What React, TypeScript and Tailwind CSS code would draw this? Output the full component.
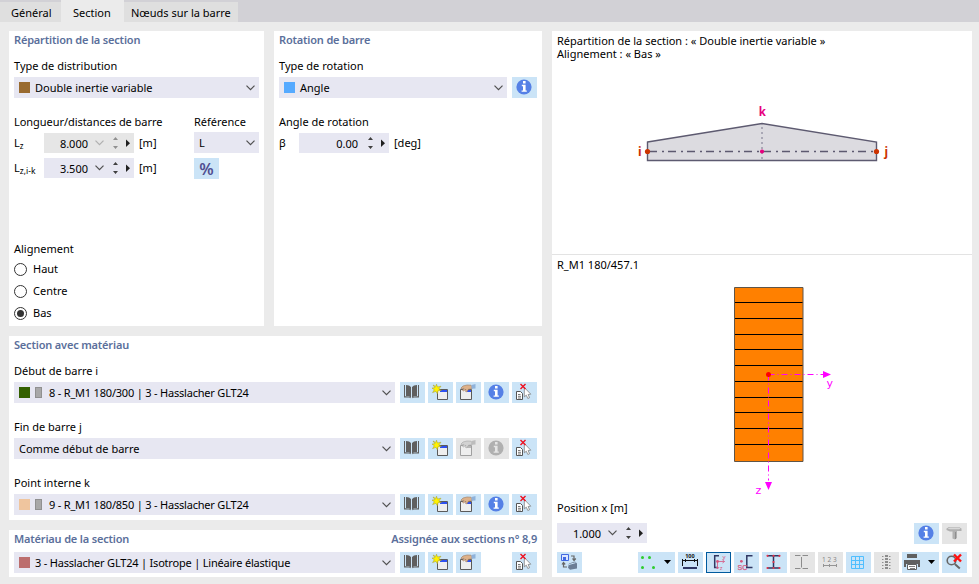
import * as React from "react";
import clsx from "clsx";

interface IChildren {
   children?: React.ReactNode;
   className?: string;
}

function Panel({ children, className }: IChildren) {
   return <section className={clsx("bg-white px-[5px]", className)}>{children}</section>;
}

function Title({ children }: IChildren) {
   return (
      <h2 className="h-[20px] text-[11px] leading-[18px] font-semibold tracking-[-0.18px] whitespace-nowrap text-[#5b6f9b]">
         {children}
      </h2>
   );
}

function Label({ children, className = "h-[20px]" }: IChildren) {
   return <div className={clsx("leading-[18px] whitespace-nowrap", className)}>{children}</div>;
}

function Chevron({ muted = false }: { muted?: boolean }) {
   return (
      <svg width="9" height="6" viewBox="0 0 9 6" fill="none" stroke={muted ? "#b0b0b0" : "#505050"} strokeWidth="1.2">
         <path d="M0.5 0.7 4.5 4.7 8.5 0.7" />
      </svg>
   );
}

interface ISelectProps {
   text: string;
   swatch?: string;
   section?: boolean;
   className?: string;
}

function Select({ text, swatch, section, className }: ISelectProps) {
   return (
      <div className={clsx("flex h-[21px] items-center bg-[#e7e7f2] pr-[4px] pl-[5px]", className)}>
         {swatch && <span className={clsx("mr-[5px] h-[11px] w-[11px]", swatch)} />}
         {section && <span className="mr-[7px] h-[11px] w-[7px] border-[1.5px] border-[#909090] bg-[#a8a8a8]" />}
         <span className="grow pt-[2px] whitespace-nowrap">{text}</span>
         <Chevron />
      </div>
   );
}

interface INumberProps {
   value: string;
   muted?: boolean;
   chevron?: boolean;
}

function NumberField({ value, muted = false, chevron = true }: INumberProps) {
   return (
      <div className={clsx("flex h-[20px] w-[90px] items-center", muted ? "bg-[#e6e6e6]" : "bg-[#e7e7f2]")}>
         <span className={clsx("pt-[2px] text-right", chevron ? "mr-[7px] w-[44px]" : "mr-[9px] w-[59px]")}>
            {value}
         </span>
         {chevron && <Chevron muted={muted} />}
         <svg
            width="20"
            height="14"
            viewBox="0 0 20 14"
            className={chevron ? "ml-[8px]" : "ml-0"}
            fill={muted ? "#909090" : "#404040"}
         >
            <path d="M1 4 3.5 1 6 4ZM1 10 3.5 13 6 10Z" />
            <path d="M14 3.5 18 7.2 14 11Z" fill="#202020" />
         </svg>
      </div>
   );
}

function Radio({ label, checked = false }: { label: string; checked?: boolean }) {
   return (
      <div className="flex h-[22px] items-center gap-[6px]">
         <span className="flex h-[13px] w-[13px] items-center justify-center rounded-full border border-[#333333] bg-white">
            {checked && <span className="h-[7px] w-[7px] rounded-full bg-[#333333]" />}
         </span>
         <span>{label}</span>
      </div>
   );
}

interface IButtonProps extends IChildren {
   off?: boolean;
   active?: boolean;
   wide?: boolean;
}

function IconButton({ children, off, active, wide, className }: IButtonProps) {
   return (
      <button
         className={clsx(
            "block h-[21px] shrink-0",
            wide ? "w-[37px]" : "w-[25px]",
            off ? "bg-[#e5e5e5]" : "bg-[#cbe4f7]",
            active && "outline outline-1 -outline-offset-1 outline-[#005a9e]",
            className
         )}
      >
         <svg width={wide ? 37 : 25} height="21" viewBox={wide ? "0 0 37 21" : "0 0 25 21"} fill="none">
            {children}
         </svg>
      </button>
   );
}

function InfoIcon({ muted = false }: { muted?: boolean }) {
   return (
      <>
         <circle cx="12" cy="10" r="7.6" fill={muted ? "#b0b0b0" : "#5580e6"} />
         <path
            d="M11 4h2.6v2.4H11ZM9.8 7.8h3.8v5.7h1.2v1.3H9.6v-1.3H11V9.2H9.8Z"
            fill={muted ? "#e5e5e5" : "#ffffff"}
         />
      </>
   );
}

function BookIcon() {
   return (
      <g fill="#5f5f5f">
         <path d="M4 3h1v12h-1ZM6 3l3 .6L11 5v10.5L9 14.4 6 14Z" />
         <path d="M18 3h1v12h-1ZM17 3l-3 .6L12 5v10.5l2-1.1 3-.4Z" />
         <path d="M4 14.2h2l3 .6 2 .8v.7L9 15.4H4ZM19 14.2h-2l-3 .6-2 .8v.7l2-.9h5Z" />
      </g>
   );
}

function NewIcon() {
   return (
      <>
         <path d="M9.5 7.5h10v10h-10Z" fill="#eeeeee" stroke="#5a5a5a" />
         <path d="M12 8h7v2h-7Z" fill="#2d50f0" />
         <path
            d="M8.5 2.2 9.5 5l3.5-.8L10.8 7l2.6 1.4-3.4.3-.6 3.1L7.9 9.3l-3.3 1.3L6.3 7.7 4 6.1l3-.4L5 3l2.7 1.4Z"
            fill="#fff200"
            stroke="#a39a24"
            strokeWidth=".5"
         />
      </>
   );
}

function EditIcon({ muted = false }: { muted?: boolean }) {
   return (
      <>
         <path d="M4.5 7.5h11v10h-11Z" fill="#eeeeee" stroke={muted ? "#a0a0a0" : "#5a5a5a"} />
         <path d="M11 8h4v2h-4Z" fill={muted ? "#b8b8b8" : "#2d50f0"} />
         <path
            d="M5 6 7 4l4-1 4 .2 1 1.3v2.3L12.4 7.3 11 9.8l-1.4-.3.2-2.2-2.3 1.6-1-.6L8 6.3 5.4 7Z"
            fill={muted ? "#d2d2d2" : "#ddb18a"}
            stroke={muted ? "#a5a5a5" : "#9a7a63"}
            strokeWidth=".6"
         />
         <path d="M15.5 3 19.5 2v4.5l-4 .3Z" fill={muted ? "#bcbcbc" : "#8fb2da"} />
      </>
   );
}

function PickIcon() {
   return (
      <>
         <path d="M4.5 9.5h4l2 2v6h-6Z" fill="#ffffff" stroke="#555555" />
         <path d="M6 12.5h2.5M6 14.3h3M6 16h3" stroke="#555555" strokeWidth=".8" />
         <path
            d="M12.3 5.5v9.4l2-1.7 1.5 3.3 1.8-.8-1.5-3.2 2.7-.3Z"
            fill="#ffffff"
            stroke="#808080"
            strokeWidth=".8"
         />
         <path d="m8.5 2 5 5m0-5-5 5" stroke="#ee1020" strokeWidth="1.4" />
      </>
   );
}

interface IMaterialRowProps {
   text: string;
   swatch?: string;
   section?: boolean;
   muted?: boolean;
   info?: boolean;
}

function MaterialRow({ text, swatch, section, muted, info = true }: IMaterialRowProps) {
   return (
      <div className="flex">
         <Select
            text={text}
            swatch={swatch}
            section={section}
            className={clsx("mr-[5px] w-[381px]", swatch && "tracking-[-0.2px]")}
         />
         <div className="flex gap-[3px]">
            <IconButton><BookIcon /></IconButton>
            <IconButton><NewIcon /></IconButton>
            <IconButton off={muted}><EditIcon muted={muted} /></IconButton>
            {info ? <IconButton off={muted}><InfoIcon muted={muted} /></IconButton> : <span className="w-[25px]" />}
            <IconButton><PickIcon /></IconButton>
         </div>
      </div>
   );
}

function BeamDrawing() {
   return (
      <svg width="420" height="192" viewBox="552 62 420 192" className="block">
         <path d="M647.5 142 762 123.5 876.5 142v18.5h-229Z" fill="#dcdbe0" stroke="#5d5a70" strokeWidth="1.4" />
         <path d="M762 127v34" stroke="#77758a" strokeDasharray="2 3" />
         <path d="M649 151.5h226" stroke="#5d5a70" strokeWidth="1.3" strokeDasharray="8 5 2 4" />
         <circle cx="647.5" cy="151.5" r="2.6" fill="#cc3300" />
         <circle cx="876.5" cy="151.5" r="2.6" fill="#cc3300" />
         <circle cx="762" cy="151.5" r="2.1" fill="#e6007e" />
         <g fontWeight="700" fontSize="12">
            <text x="638" y="156" fill="#cc3300">i</text>
            <text x="884.5" y="156" fill="#cc3300">j</text>
            <text x="758.8" y="115.5" fill="#e6007e" fontSize="11.5">k</text>
         </g>
      </svg>
   );
}

const LAYERS = [302, 318, 334, 349, 365, 381, 397, 412, 428, 444];

function SectionDrawing() {
   return (
      <svg width="420" height="226" viewBox="552 275 420 226" className="block">
         <path d="M734.5 287.5h68.5v174h-68.5Z" fill="#ff8000" stroke="#605548" />
         {LAYERS.map((y) => (
            <path key={y} d={`M735 ${y + 0.5}h67.5`} stroke="#000000" />
         ))}
         <path d="M768.5 374.5h55M768.5 374.5v106" stroke="#ff00ff" strokeDasharray="6 3 1 3" />
         <path d="M823 371v7l8-3.5ZM765 482h7l-3.5 8Z" fill="#ff00ff" />
         <circle cx="768.5" cy="374.5" r="2.5" fill="#ff0000" />
         <g fill="#ff00ff" fontFamily="DejaVu Sans" fontSize="11">
            <text x="826.5" y="387">y</text>
            <text x="755.5" y="494">z</text>
         </g>
      </svg>
   );
}

function Toolbar() {
   return (
      <div className="flex px-[5px]">
         <IconButton className="mr-[56px]">
            <path d="M4.5 2.5h7v6h-7Z" fill="#dce6ff" stroke="#4169e1" />
            <path d="M6 5h3v3H6Z" fill="#4169e1" />
            <path d="M14 4h3v4M15.5 6.5 17 8.5l1.8-2M10 15H6.5v-4M5 12.5 6.5 10.5l1.7 2" stroke="#666666" strokeWidth="1.2" />
            <path d="m12 11.5 6-2 2 2v5l-7 1.2-2-2Z" fill="#6b7d95" />
            <path d="m12 12.5 6.5-1.8" stroke="#cbe4f7" />
         </IconButton>
         <div className="flex gap-[3px]">
            <IconButton wide>
               <g fill="#2ecc2e">
                  <circle cx="4.5" cy="5.5" r="1.5" />
                  <circle cx="11.5" cy="5.5" r="1.5" />
                  <circle cx="4.5" cy="15.5" r="1.5" />
                  <circle cx="15.5" cy="15.5" r="1.5" />
               </g>
               <path d="M26 8h7l-3.5 4Z" fill="#000000" />
            </IconButton>
            <IconButton>
               <path d="M4.5 7v7M19.5 7v7M5 8.5h14M7.5 7v3M16.5 7v3" stroke="#111111" />
               <path d="M5 15h14v2H5Z" fill="#2f3763" />
               <text x="7.2" y="6.3" fontSize="5.5" fontWeight="700" fill="#111111">100</text>
            </IconButton>
            <IconButton active>
               <path d="M13 3.8H8.7v11.7H12" stroke="#2f3763" strokeWidth="1.5" />
               <path d="M11.5 9.5h7M11.5 9.5v7M16.5 8l2 1.5-2 1.5M10 15l1.5 2 1.5-2" stroke="#d6648c" strokeWidth=".9" />
               <circle cx="11.5" cy="9.5" r="1.4" fill="#d6547c" />
               <g fill="#d6547c" fontSize="6">
                  <text x="16.5" y="7">y</text>
                  <text x="13.7" y="18">z</text>
               </g>
            </IconButton>
            <IconButton>
               <path d="M18.5 3.8H12.8v11.7h5.7" stroke="#2f3763" strokeWidth="1.5" />
               <circle cx="7.4" cy="9.3" r="1.4" fill="#d6547c" />
               <text x="3.5" y="18" fontSize="7" fontFamily="Liberation Sans" fill="#d6547c" stroke="#d6547c" strokeWidth=".25">
                  SC
               </text>
            </IconButton>
            <IconButton>
               <path d="M5 3.8h13M5 16h13M11.5 4v12" stroke="#2f3763" strokeWidth="1.5" />
               <g fill="#e8354b">
                  <circle cx="5.5" cy="3.8" r="1.1" />
                  <circle cx="11.5" cy="3.8" r="1.1" />
                  <circle cx="17.5" cy="3.8" r="1.1" />
                  <circle cx="11.5" cy="10" r="1.1" />
                  <circle cx="5.5" cy="16" r="1.1" />
                  <circle cx="11.5" cy="16" r="1.1" />
                  <circle cx="17.5" cy="16" r="1.1" />
               </g>
            </IconButton>
            <IconButton off>
               <path d="M5 3.5h5.5m2 0H18M5 16.5h5.5m2 0H18M11.5 5v10.5" stroke="#8c8c8c" />
            </IconButton>
            <IconButton off>
               <text x="4" y="10" fontSize="6.5" fill="#858585" letterSpacing="1.8">123</text>
               <path d="M5 13.5h14M5.5 12v3m6-3v3m7-3v3" stroke="#949494" />
            </IconButton>
            <IconButton>
               <path d="M5.5 4.5h12v12h-12ZM9.5 4.5v12m4-12v12m-8-8h12m-12 4h12" stroke="#50bfff" />
            </IconButton>
            <IconButton off>
               <path
                  d="M8 4.5h2m5 0h2m-9 3h2m5 0h2m-9 3h2m5 0h2m-9 3h2m5 0h2m-9 3h2m5 0h2"
                  stroke="#909090"
                  strokeDasharray="1 .5"
               />
               <path d="M12.5 3v14" stroke="#8c8c8c" strokeWidth="3" strokeDasharray="2 1" />
            </IconButton>
            <IconButton wide>
               <path d="M5 2h10v4H5ZM2 8h16v7h-2v-3H4v3H2Z" fill="#606060" />
               <path d="M5.5 12.5h9v5h-9Z" fill="#ffffff" stroke="#606060" />
               <path d="M7 14.5h6m-5 2h5" stroke="#606060" strokeWidth=".8" />
               <path d="M26 8h7l-3.5 4Z" fill="#000000" />
            </IconButton>
            <IconButton>
               <circle cx="9.5" cy="8.5" r="4.3" stroke="#666666" strokeWidth="1.6" />
               <path d="m12.8 12 5 4.5" stroke="#666666" strokeWidth="2" />
               <path d="m12 2.5 7 7m0-7-7 7" stroke="#ff1010" strokeWidth="2.4" />
            </IconButton>
         </div>
      </div>
   );
}

function Tabs() {
   return (
      <nav className="flex h-[22px] items-end bg-[#d2d1d6]">
         <div className="h-[20px] w-[61px] bg-[#dfdfdf] pl-[11px] leading-[22px]">Général</div>
         <div className="h-[22px] w-[63px] bg-[#ebebeb] pl-[12px] leading-[26px]">Section</div>
         <div className="h-[20px] w-[114px] bg-[#dfdfdf] pl-[7px] leading-[22px] whitespace-nowrap">
            Nœuds sur la barre
         </div>
      </nav>
   );
}

export default function App() {
   return (
      <main className="h-[584px] w-[979px] overflow-hidden bg-[#ebebeb] font-['Noto_Sans','Open_Sans',sans-serif] text-[11px] text-black">
         <Tabs />
         <div className="flex gap-[10px] px-[9px] pt-[9px]">
            <div className="flex w-[533px] flex-col gap-[10px]">
               <div className="flex h-[295px] gap-[10px]">
                  <Panel className="w-[255px]">
                     <Title>Répartition de la section</Title>
                     <Label className="mt-[6px] h-[20px]">Type de distribution</Label>
                     <Select text="Double inertie variable" swatch="bg-[#996b30]" />
                     <div className="mt-[15px] flex justify-between">
                        <div>
                           <Label className="h-[20px] tracking-[-0.05px]">Longueur/distances de barre</Label>
                           <div className="flex h-[20px] items-center">
                              <span className="w-[30px]">L<sub className="text-[8px]">z</sub></span>
                              <NumberField value="8.000" muted />
                              <span className="ml-[5px]">[m]</span>
                           </div>
                           <div className="mt-[5px] flex h-[20px] items-center">
                              <span className="w-[30px]">L<sub className="text-[8.5px]">z,i-k</sub></span>
                              <NumberField value="3.500" />
                              <span className="ml-[5px]">[m]</span>
                           </div>
                        </div>
                        <div className="w-[65px]">
                           <Label className="h-[19px]">Référence</Label>
                           <Select text="L" />
                           <button className="mt-[5px] block h-[21px] w-[25px] bg-[#cbe4f7] text-[16.5px] leading-[21px] font-semibold text-[#504f91]">
                              %
                           </button>
                        </div>
                     </div>
                     <Label className="mt-[61px] h-[18px]">Alignement</Label>
                     <Radio label="Haut" />
                     <Radio label="Centre" />
                     <Radio label="Bas" checked />
                  </Panel>
                  <Panel className="w-[268px]">
                     <Title>Rotation de barre</Title>
                     <Label className="mt-[6px] h-[20px]">Type de rotation</Label>
                     <div className="flex gap-[5px]">
                        <Select text="Angle" swatch="bg-[#55aaff]" className="w-[228px]" />
                        <IconButton><InfoIcon /></IconButton>
                     </div>
                     <Label className="mt-[15px] h-[20px]">Angle de rotation</Label>
                     <div className="flex h-[20px] items-center">
                        <span className="w-[20px]">β</span>
                        <NumberField value="0.00" chevron={false} />
                        <span className="ml-[5px]">[deg]</span>
                     </div>
                  </Panel>
               </div>
               <Panel className="h-[184px]">
                  <Title>Section avec matériau</Title>
                  <Label className="mt-[6px] h-[20px]">Début de barre i</Label>
                  <MaterialRow text="8 - R_M1 180/300 | 3 - Hasslacher GLT24" swatch="bg-[#336000]" section />
                  <Label className="mt-[15px] h-[20px]">Fin de barre j</Label>
                  <MaterialRow text="Comme début de barre" muted />
                  <Label className="mt-[15px] h-[20px]">Point interne k</Label>
                  <MaterialRow text="9 - R_M1 180/850 | 3 - Hasslacher GLT24" swatch="bg-[#efc59e]" section />
               </Panel>
               <Panel className="h-[47px]">
                  <div className="flex h-[22px] justify-between">
                     <Title>Matériau de la section</Title>
                     <Title>Assignée aux sections n° 8,9</Title>
                  </div>
                  <MaterialRow
                     text="3 - Hasslacher GLT24 | Isotrope | Linéaire élastique"
                     swatch="bg-[#bc6e6e]"
                     info={false}
                  />
               </Panel>
            </div>
            <section className="h-[546px] w-[420px] bg-white">
               <div className="h-[31px] px-[5px] pt-[3px] leading-[13px]">
                  <p>Répartition de la section : « Double inertie variable »</p>
                  <p>Alignement : « Bas »</p>
               </div>
               <BeamDrawing />
               <div className="h-[21px] border-t border-[#e3e3e3] px-[5px] leading-[19px]">R_M1 180/457.1</div>
               <div className="h-[226px]"><SectionDrawing /></div>
               <div className="h-[20px] px-[5px] leading-[14px]">Position x [m]</div>
               <div className="flex h-[31px] justify-between px-[5px] pt-[2px]">
                  <NumberField value="1.000" />
                  <div className="flex gap-[3px]">
                     <IconButton><InfoIcon /></IconButton>
                     <IconButton off>
                        <path d="m4.5 5.5 2.5-1.5h10l2.5 1.5v2.5h-4.5v7l-2 1.5-2.5-1V8.5H8L4.5 7Z" fill="#b0b0b0" />
                        <path d="m5.5 5.5 2.5-1h9l1.5 1-1.5.8H8Z" fill="#d8d8d8" />
                        <path d="M13.5 9v7" stroke="#8e8e8e" />
                     </IconButton>
                  </div>
               </div>
               <Toolbar />
            </section>
         </div>
      </main>
   );
}
